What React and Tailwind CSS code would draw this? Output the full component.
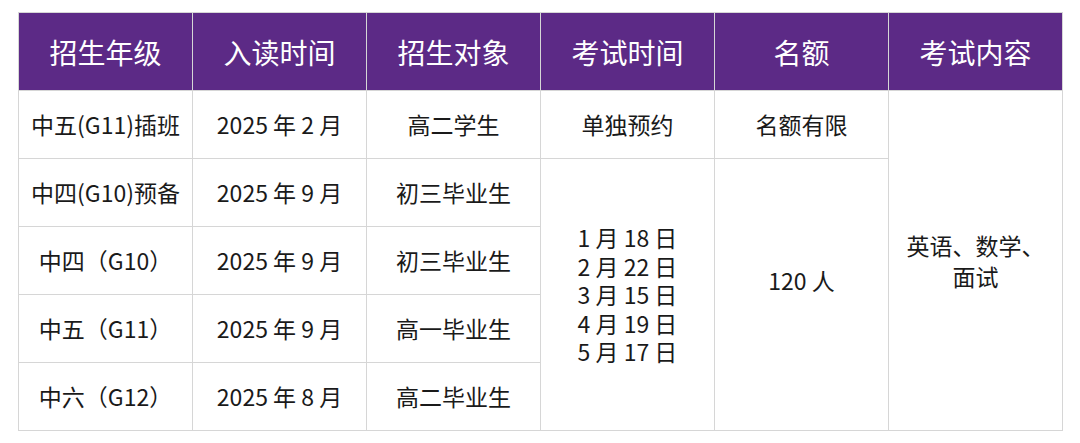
import React from "react";

// 招生信息表
const headers = ["招生年级", "入读时间", "招生对象", "考试时间", "名额", "考试内容"];

const rows = [
  ["中五(G11)插班", "2025 年 2 月", "高二学生"],
  ["中四(G10)预备", "2025 年 9 月", "初三毕业生"],
  ["中四（G10）", "2025 年 9 月", "初三毕业生"],
  ["中五（G11）", "2025 年 9 月", "高一毕业生"],
  ["中六（G12）", "2025 年 8 月", "高二毕业生"],
];

const dates = ["1 月 18 日", "2 月 22 日", "3 月 15 日", "4 月 19 日", "5 月 17 日"];

const cell = "border border-[#d6d6d6] text-center align-middle px-1";

export default function App() {
  return (
    <div
      className="w-[1080px] h-[443px] bg-white pt-[12px] pl-[18px]"
      style={{ fontFamily: '"Noto Sans CJK SC", "Noto Sans", sans-serif' }}
    >
      <table className="border-collapse table-fixed w-[1044px] text-[23px] text-[#1a1a1a]">
        <colgroup>
          {headers.map((h) => (
            <col key={h} className="w-[174px]" />
          ))}
        </colgroup>
        <thead>
          <tr className="h-[78px] bg-[#5c2a86]">
            {headers.map((h) => (
              <th key={h} className={`${cell} text-white font-normal text-[28px]`}>
                {h}
              </th>
            ))}
          </tr>
        </thead>
        <tbody>
          {rows.map((r, i) => (
            <tr key={i} className="h-[68px]">
              <td className={`${cell} whitespace-nowrap`}>{r[0]}</td>
              <td className={cell}>{r[1]}</td>
              <td className={cell}>{r[2]}</td>
              {i === 0 && (
                <>
                  <td className={cell}>单独预约</td>
                  <td className={cell}>名额有限</td>
                  <td rowSpan={5} className={`${cell} leading-[31px] px-3`}>
                    英语、数学、面试
                  </td>
                </>
              )}
              {i === 1 && (
                <>
                  <td rowSpan={4} className={`${cell} leading-[28.5px]`}>
                    {dates.map((d) => (
                      <div key={d}>{d}</div>
                    ))}
                  </td>
                  <td rowSpan={4} className={`${cell} pb-[28px]`}>120 人</td>
                </>
              )}
            </tr>
          ))}
        </tbody>
      </table>
    </div>
  );
}
